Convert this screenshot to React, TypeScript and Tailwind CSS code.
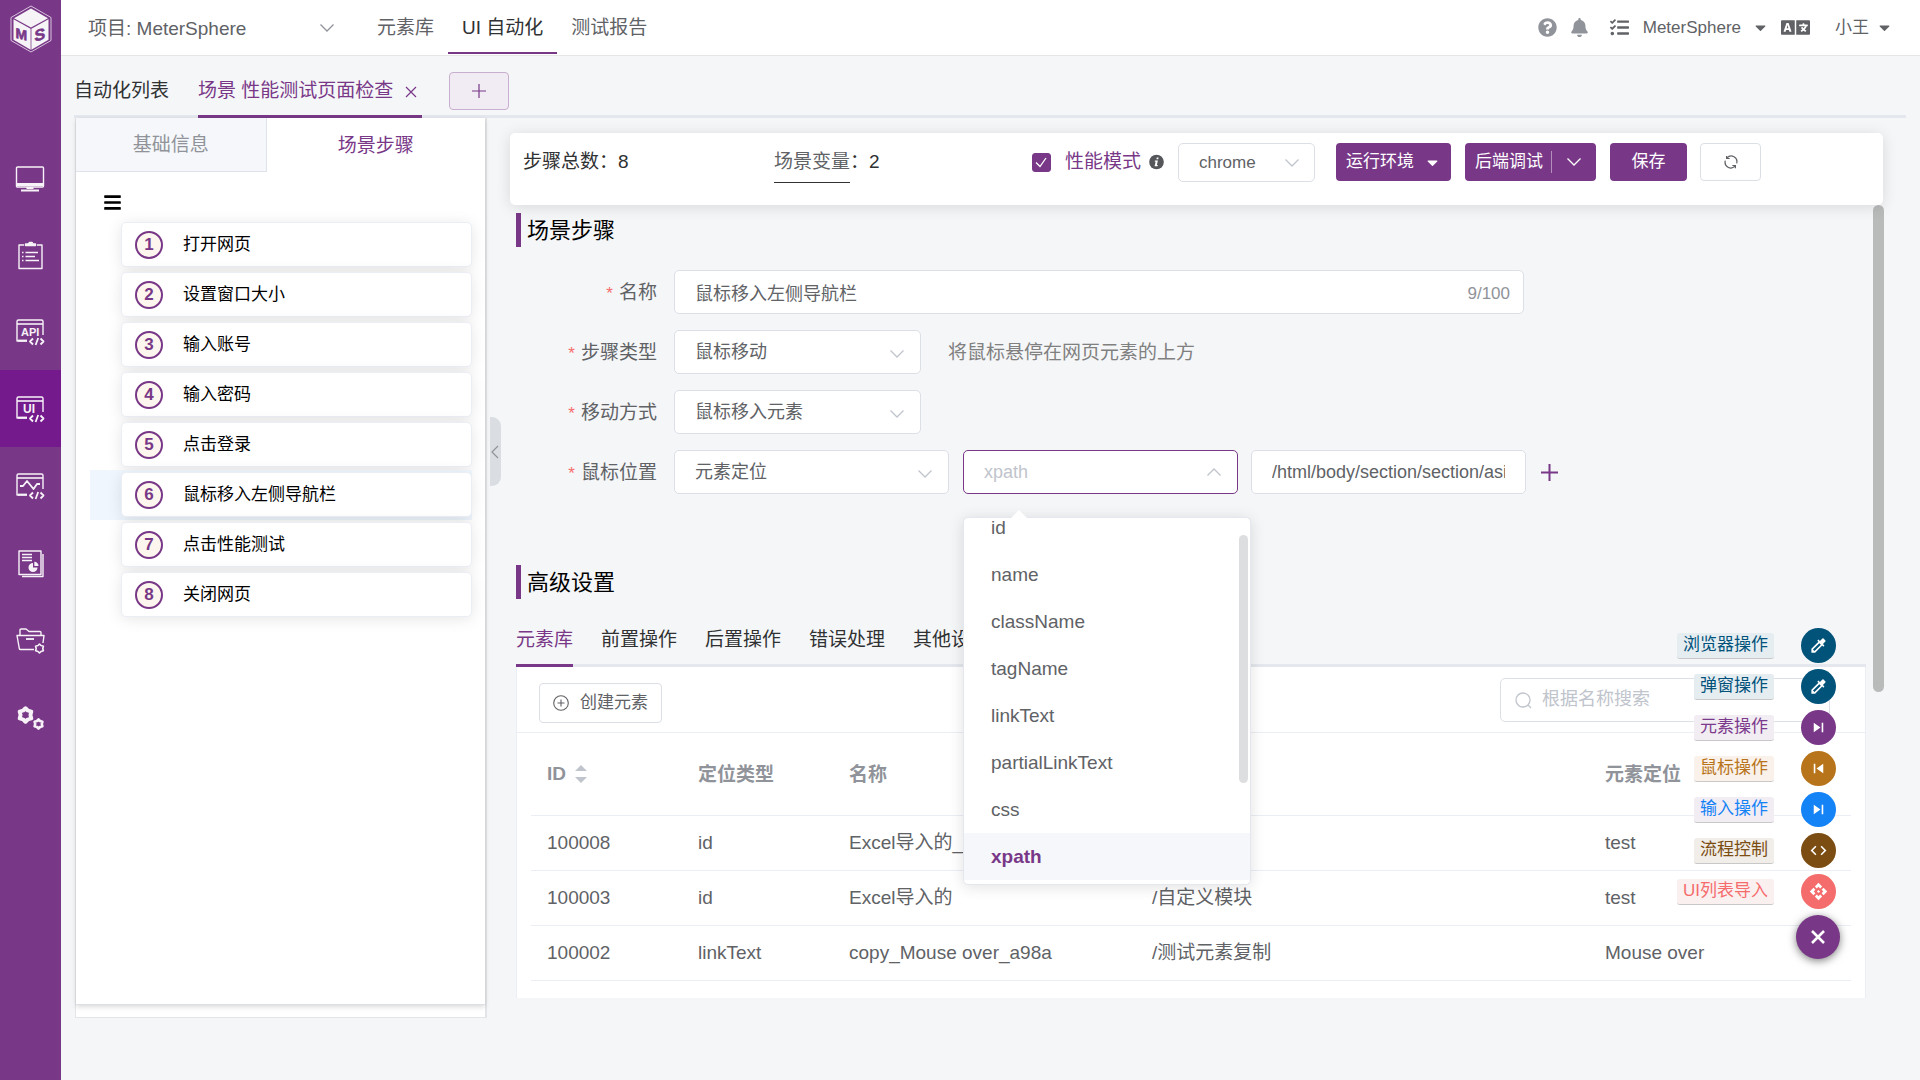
import { ReactNode, useState } from "react";
import { FaBars, FaBell, FaCaretDown, FaLanguage, FaQuestionCircle, FaTasks } from "react-icons/fa";
import { MdApi, MdCode, MdColorize, MdSkipNext, MdSkipPrevious } from "react-icons/md";

const steps = [
  "打开网页",
  "设置窗口大小",
  "输入账号",
  "输入密码",
  "点击登录",
  "鼠标移入左侧导航栏",
  "点击性能测试",
  "关闭网页",
];

const locators = ["id", "name", "className", "tagName", "linkText", "partialLinkText", "css", "xpath"];

const elements = [
  { id: "100008", type: "id", name: "Excel导入的_", module: "", locator: "test" },
  { id: "100003", type: "id", name: "Excel导入的", module: "/自定义模块", locator: "test" },
  { id: "100002", type: "linkText", name: "copy_Mouse over_a98a", module: "/测试元素复制", locator: "Mouse over" },
];

const actions = [
  { label: "浏览器操作", icon: <MdColorize />, text: "text-[#00527a] bg-[#e6edf1]", dot: "bg-[#02537a]" },
  { label: "弹窗操作", icon: <MdColorize />, text: "text-[#00527a] bg-[#e6edf1]", dot: "bg-[#02537a]" },
  { label: "元素操作", icon: <MdSkipNext />, text: "text-[#7b3a8b] bg-[#f2ecf3]", dot: "bg-[#783887]" },
  { label: "鼠标操作", icon: <MdSkipPrevious />, text: "text-[#b8741a] bg-[#f9f1ea]", dot: "bg-[#b8741a]" },
  { label: "输入操作", icon: <MdSkipNext />, text: "text-[#1483f6] bg-[#f2ecf3]", dot: "bg-[#1483f6]" },
  { label: "流程控制", icon: <MdCode />, text: "text-[#7b4d12] bg-[#f1ede8]", dot: "bg-[#7b4d12]" },
  { label: "UI列表导入", icon: <MdApi />, text: "text-[#f56c6c] bg-[#fbf0f0]", dot: "bg-[#f56c6c]" },
];

const Chevron = ({ className = "" }: { className?: string }) => (
  <svg className={`pointer-events-none h-4 w-4 ${className}`} viewBox="0 0 16 16" fill="none" stroke="currentColor" strokeWidth="1.3">
    <path d="M1.5 4.5 8 11 14.5 4.5" />
  </svg>
);

const Logo = () => (
  <svg className="h-12 w-[42px]" viewBox="0 0 42 48">
    <path d="M21 1 41 12.5V35.5L21 47 1 35.5V12.5Z" fill="none" stroke="#d9c4de" strokeWidth="1" />
    <path d="M21 3.5 38 13.2 21 22.6 4 13.2Z" fill="#f7f4f8" />
    <path d="M3.5 14.3 20.6 23.8V44.7L3.5 34.7Z" fill="#f7f4f8" />
    <path d="M38.5 14.3 21.4 23.8V44.7L38.5 34.7Z" fill="#f7f4f8" />
    <g fill="#783887" stroke="#783887" strokeWidth="0.6" fontFamily="Liberation Sans, sans-serif" fontWeight="700">
      <text x="5.5" y="31.5" fontSize="14" transform="skewY(14)">M</text>
      <text x="24.5" y="42.5" fontSize="16" transform="skewY(-14)">S</text>
    </g>
  </svg>
);

const NavSvg = ({ children }: { children: ReactNode }) => (
  <svg className="h-[30px] w-[30px]" viewBox="0 0 30 30" fill="none" stroke="#f7f2f8" strokeWidth="1.4" strokeLinejoin="round">
    {children}
  </svg>
);

// browser frame shared by the api, ui and performance icons
const CodeFrame = ({ children }: { children: ReactNode }) => (
  <NavSvg>
    <path d="M28 17V3.5Q28 2 26.5 2H3.5Q2 2 2 3.5V23H12" />
    <path d="M2 6H28" strokeWidth="1.6" />
    <path d="M3 22.6H12" strokeWidth="2" />
    <path d="M18 20.5 15 23.5 18 26.5M25.5 20.5 28.5 23.5 25.5 26.5M23.2 20 20.6 27" strokeWidth="1.8" />
    {children}
  </NavSvg>
);

const gear = "M0-4.5 1.5-3 3.9-2.3 3.3 0 3.9 2.3 1.5 3 0 4.5-1.5 3-3.9 2.3-3.3 0-3.9-2.3-1.5-3Z";

const navItems = [
  {
    name: "工作台",
    icon: (
      <NavSvg>
        <rect x="1.5" y="3" width="27" height="20" rx="1" />
        <path d="M2 20.5H28" strokeWidth="3" />
        <path d="M11.5 24H18.5M6 26.5H24" strokeWidth="2" />
      </NavSvg>
    ),
  },
  {
    name: "测试跟踪",
    icon: (
      <NavSvg>
        <path d="M9 4H4V27.5H27V4H22" />
        <path d="M10.5 4.5V3H13.5L14.5 1.5H17L18 3H20.5V4.5Z" fill="#f7f2f8" />
        <path d="M7 11.5H8.5M7 15.5H8.5M7 19.5H8.5M10.5 11.5H23M10.5 15.5H20M10.5 19.5H24" />
      </NavSvg>
    ),
  },
  {
    name: "接口测试",
    icon: (
      <CodeFrame>
        <text x="6" y="17.5" fontSize="11" fontWeight="700" fill="#f7f2f8" stroke="none" fontFamily="Liberation Sans, sans-serif">API</text>
      </CodeFrame>
    ),
  },
  {
    name: "UI测试",
    icon: (
      <CodeFrame>
        <text x="8" y="18" fontSize="12" fontWeight="700" fill="#f7f2f8" stroke="none" fontFamily="Liberation Sans, sans-serif">UI</text>
      </CodeFrame>
    ),
  },
  {
    name: "性能测试",
    icon: (
      <CodeFrame>
        <path d="M5 14H8L12 9 18.5 17 22 12H25" strokeWidth="1.8" />
      </CodeFrame>
    ),
  },
  {
    name: "报表统计",
    icon: (
      <NavSvg>
        <rect x="4" y="2" width="22" height="23.5" />
        <path d="M28 5V27.5H7" />
        <path d="M7 5.5H17M7 8.5H17M7 11.5H17" />
        <path d="M18 14A4.5 4.5 0 1 0 22.5 18.5H18Z" fill="#f7f2f8" stroke="none" />
        <path d="M19.3 12.8A4.2 4.2 0 0 1 23.5 17H19.3Z" fill="#f7f2f8" stroke="none" />
      </NavSvg>
    ),
  },
  {
    name: "项目设置",
    icon: (
      <NavSvg>
        <path d="M5 9V4Q5 3 6 3H11L14 5.5H25Q26 5.5 26 6.5V9" />
        <path d="M19 23.5H5.5Q4.5 23.5 4.3 22.5L2 9.5H29L28 17" />
        <path d="M11 13H19" strokeWidth="1.8" />
        <g transform="translate(24.5 22.5)"><path d={gear} strokeWidth="1.6" /></g>
      </NavSvg>
    ),
  },
  {
    name: "系统设置",
    icon: (
      <NavSvg>
        <g transform="translate(10.5 12) scale(1.5)"><path d={gear} strokeWidth="2.6" /></g>
        <g transform="translate(23.5 21)"><path d={gear} strokeWidth="2.6" /></g>
      </NavSvg>
    ),
  },
];

const Sidebar = () => (
  <aside className="flex w-[61px] shrink-0 flex-col bg-[#783887]">
    <div className="flex h-[139px] justify-center pt-[5px]">
      <Logo />
    </div>
    <nav>
      {navItems.map((item) => (
        <a
          key={item.name}
          href="#"
          aria-label={item.name}
          className={`flex h-[77px] items-center justify-center pt-[2px] pr-[2px] ${item.name === "UI测试" ? "bg-[#751a8c]" : ""}`}
        >
          {item.icon}
        </a>
      ))}
    </nav>
  </aside>
);

const Header = () => (
  <header className="flex h-14 shrink-0 items-stretch border-b border-[#e6e6e6] bg-white px-[27px] text-[#606266]">
    <button className="flex w-[247px] items-center justify-between pt-1 text-[19px]">
      <span>项目: MeterSphere</span>
      <Chevron className="mb-1 text-[#909399]" />
    </button>
    <nav className="ml-[28px] flex text-[19px]">
      <a href="#" className="flex h-[54px] items-center px-[14px] pt-[2px]">元素库</a>
      <a href="#" className="flex h-[54px] items-center border-b-2 border-[#783887] px-[14px] pt-1 text-[#303133]">UI 自动化</a>
      <a href="#" className="flex h-[54px] items-center px-[14px] pt-[2px]">测试报告</a>
    </nav>
    <div className="ml-auto flex h-[54px] items-center pt-px text-[17px]">
      <button aria-label="帮助"><FaQuestionCircle className="text-[19px] text-[#909399]" /></button>
      <button aria-label="通知" className="ml-[13px]"><FaBell className="text-[19px] text-[#909399]" /></button>
      <button aria-label="任务" className="ml-[21px]"><FaTasks className="text-[19px]" /></button>
      <button className="ml-[14px] flex items-center gap-[11px]">
        MeterSphere
        <FaCaretDown />
      </button>
      <button aria-label="语言" className="ml-[12px]"><FaLanguage className="text-[29px]" /></button>
      <button className="ml-[25px] flex items-center gap-[7px]">
        小王
        <FaCaretDown />
      </button>
    </div>
  </header>
);

const StepPanel = () => {
  const [current, setCurrent] = useState(5);
  return (
    <section className="mb-[62px] flex w-[412px] shrink-0 flex-col border border-t-0 border-r-2 border-[#e4e5e8] bg-white pb-3">
      <div className="flex-1 border-b border-[#dcdfe6] shadow-[0_2px_5px_rgba(0,0,0,0.15)]">
        <div className="flex h-[54px] text-[19px]">
          <button className="flex-[190] border-r border-b border-[#dfe3ec] bg-[#f5f7fa] pt-[2px] text-[#909399]">基础信息</button>
          <button className="flex-[219] pt-[2px] text-[#783887]">场景步骤</button>
        </div>
        <button aria-label="菜单" className="mt-[21px] ml-[27px] block text-[19px] text-black"><FaBars /></button>
        <ul className="mt-2 mr-[13px] ml-[14px]">
          {steps.map((step, i) => (
            <li key={step} className={`pt-[2px] pb-[3px] pl-[31px] ${i === current ? "bg-[#eff6fe]" : ""}`}>
              <button
                onClick={() => setCurrent(i)}
                className="flex h-[45px] w-full items-center rounded-[5px] border border-[#ebeef5] bg-white pl-[13px] text-left text-[17px] text-black shadow-[0_2px_15px_rgba(0,0,0,0.1)]"
              >
                <span className="flex h-7 w-7 items-center justify-center rounded-full border-2 border-[#783887] bg-[#fcf6ee] font-bold text-[#783887]">
                  {i + 1}
                </span>
                <span className="ml-5">{step}</span>
              </button>
            </li>
          ))}
        </ul>
      </div>
    </section>
  );
};

const Toolbar = () => (
  <div className="relative z-10 mr-[37px] ml-[9px] flex h-[72px] items-start rounded-[5px] bg-white pt-[10px] pr-[122px] pl-[13px] text-[17px] shadow-[0_2px_15px_rgba(0,0,0,0.12)]">
    <p className="flex h-[38px] w-[251px] items-center text-[19px] text-[#303133]">步骤总数：8</p>
    <p className="flex h-[38px] items-center text-[19px] text-[#303133]">
      <a href="#" className="border-b border-[#303133] pt-[7px] pb-[6px] text-[#606266]">场景变量</a>：2
    </p>
    <label className="ml-auto flex h-[38px] items-center gap-[14px] text-[19px] text-[#783887]">
      <span className="relative h-[19px] w-[19px]">
        <input type="checkbox" defaultChecked className="block h-[19px] w-[19px] appearance-none rounded-[3px] border border-[#783887] checked:bg-[#783887]" />
        <svg className="pointer-events-none absolute inset-0" viewBox="0 0 19 19" fill="none" stroke="#fff" strokeWidth="1.3">
          <path d="M4 9.5 8 13.5 14 5" />
        </svg>
      </span>
      性能模式
    </label>
    <svg className="ml-2 h-[38px] w-[15px]" viewBox="0 0 16 16">
      <circle cx="8" cy="8" r="7.8" fill="#54565a" />
      <path d="M8.3 3.2h1.9l-.4 1.8H7.9ZM6.3 6.4h3.2l-1.1 4.7h1l-.3 1.3H5.9l1.2-4.7h-1Z" fill="#fff" />
    </svg>
    <div className="relative ml-[14px]">
      <select aria-label="浏览器" className="h-[39px] w-[137px] appearance-none rounded-[5px] border border-[#dcdfe6] bg-white pl-5 text-[#606266]">
        <option>chrome</option>
      </select>
      <Chevron className="absolute top-3 right-[15px] text-[#c0c4cc]" />
    </div>
    <button className="ml-[21px] flex h-[38px] items-center gap-[10px] rounded-[4px] bg-[#783887] px-[10px] text-white">
      运行环境
      <FaCaretDown />
    </button>
    <div className="ml-[14px] flex h-[38px] items-center rounded-[4px] bg-[#783887] text-white">
      <button className="py-1 pr-2 pl-[10px]">后端调试</button>
      <button aria-label="更多调试" className="border-l border-[#b48fbe] px-[14px] py-[3px]"><Chevron /></button>
    </div>
    <button className="ml-[14px] h-[38px] w-[77px] rounded-[4px] bg-[#783887] text-white">保存</button>
    <button aria-label="刷新" className="ml-[13px] flex h-[38px] w-[61px] items-center justify-center rounded-[4px] border border-[#dcdfe6] text-[#606266]">
      <svg className="h-[14px] w-[14px]" viewBox="0 0 16 16" fill="none" stroke="currentColor" strokeWidth="1.4">
        <path d="M14.5 9.5A6.5 6.5 0 0 0 3.5 3.3M1.5 6.5A6.5 6.5 0 0 0 12.5 12.7M3 1V4H6.5M13 15V12H9.5" />
      </svg>
    </button>
  </div>
);

const FormRow = ({ id, label, children }: { id: string; label: string; children: ReactNode }) => (
  <div className="flex h-11 items-center">
    <label htmlFor={id} className="mr-[17px] w-[141px] pt-[2px] text-right text-[19px] text-[#606266]">
      <span className="mr-[6px] text-[17px] text-[#f56c6c]">*</span>
      {label}
    </label>
    {children}
  </div>
);

const Select = ({ id, value, wide }: { id: string; value: string; wide?: boolean }) => (
  <div className="relative">
    <select
      id={id}
      className={`h-11 appearance-none rounded-[5px] border border-[#dcdfe6] bg-white pl-5 text-[18px] text-[#606266] ${wide ? "w-[275px]" : "w-[247px]"}`}
    >
      <option>{value}</option>
    </select>
    <Chevron className="absolute top-4 right-4 text-[#c0c4cc]" />
  </div>
);

const LocatorSelect = () => {
  const [locator, setLocator] = useState("xpath");
  return (
    <div className="relative ml-[14px]">
      <input
        aria-label="定位方式"
        role="combobox"
        aria-expanded="true"
        readOnly
        placeholder={locator}
        className="h-11 w-[275px] rounded-[5px] border border-[#783887] bg-white pl-5 text-[18px] placeholder:text-[#c0c4cc]"
      />
      <Chevron className="absolute top-[14px] right-4 rotate-180 text-[#c0c4cc]" />
      <div className="absolute top-[67px] left-0 z-20 h-[368px] w-[288px] rounded-[5px] border border-[#e4e7ed] bg-white shadow-[0_2px_15px_rgba(0,0,0,0.12)]">
        <svg className="absolute -top-2 left-[47px] h-2 w-4" viewBox="0 0 16 8">
          <path d="M0 8 8 0 16 8Z" fill="#fff" />
        </svg>
        <div className="h-full overflow-hidden">
          <ul role="listbox" className="-mt-[14px] text-[19px] leading-5 text-[#606266]">
            {locators.map((name) => (
              <li
                key={name}
                role="option"
                aria-selected={name === locator}
                onClick={() => setLocator(name)}
                className={`flex h-[47px] items-center px-[27px] ${name === locator ? "bg-[#f5f7fa] font-bold text-[#783887]" : ""}`}
              >
                {name}
              </li>
            ))}
          </ul>
        </div>
        <div className="absolute top-[17px] right-[2px] h-[248px] w-[9px] rounded-full bg-[#dddee0]" />
      </div>
    </div>
  );
};

const SectionTitle = ({ children }: { children: ReactNode }) => (
  <h2 className="flex h-[34px] items-center border-l-[5px] border-[#783887] pl-[6px] text-[22px] text-black">{children}</h2>
);

const StepForm = () => (
  <form className="mt-[23px] flex flex-col gap-4">
    <FormRow id="name" label="名称">
      <div className="relative">
        <input
          id="name"
          defaultValue="鼠标移入左侧导航栏"
          className="h-11 w-[850px] rounded-[5px] border border-[#dcdfe6] bg-white pr-16 pl-5 text-[18px] text-[#606266]"
        />
        <span className="absolute top-[11px] right-[14px] text-[17px] text-[#909399]">9/100</span>
      </div>
    </FormRow>
    <FormRow id="type" label="步骤类型">
      <Select id="type" value="鼠标移动" />
      <span className="ml-[27px] pt-[2px] text-[19px] text-[#808080]">将鼠标悬停在网页元素的上方</span>
    </FormRow>
    <FormRow id="mode" label="移动方式">
      <Select id="mode" value="鼠标移入元素" />
    </FormRow>
    <FormRow id="position" label="鼠标位置">
      <Select id="position" value="元素定位" wide />
      <LocatorSelect />
      <input
        aria-label="定位表达式"
        defaultValue="/html/body/section/section/asi"
        className="ml-[13px] h-11 w-[275px] rounded-[5px] border border-[#dcdfe6] bg-white px-5 text-[18px] text-[#606266]"
      />
      <button type="button" aria-label="添加" className="ml-[15px] text-[#783887]">
        <svg className="h-[17px] w-[17px]" viewBox="0 0 17 17" stroke="currentColor" strokeWidth="2">
          <path d="M8.5 0V17M0 8.5H17" />
        </svg>
      </button>
    </FormRow>
  </form>
);

const ElementTable = () => (
  <div className="border-x border-[#ebeef5] bg-white">
    <div className="flex h-[66px] items-center justify-between border-b border-[#ebeef5] pr-[35px] pl-[22px]">
      <button className="mt-[6px] flex h-10 items-center gap-[11px] rounded-[4px] border border-[#dcdfe6] px-[13px] text-[17px] text-[#606266]">
        <svg className="h-4 w-4" viewBox="0 0 16 16" fill="none" stroke="currentColor" strokeWidth="1.1">
          <circle cx="8" cy="8" r="7.3" />
          <path d="M8 4.5V11.5M4.5 8H11.5" />
        </svg>
        创建元素
      </button>
      <div className="relative">
        <svg className="absolute top-[14px] left-[15px] h-[17px] w-[17px] text-[#c0c4cc]" viewBox="0 0 17 17" fill="none" stroke="currentColor" strokeWidth="1.3">
          <circle cx="8" cy="8" r="7" />
          <path d="M13 13 16 16" />
        </svg>
        <input
          aria-label="搜索"
          placeholder="根据名称搜索"
          className="h-11 w-[330px] rounded-[5px] border border-[#dcdfe6] pl-[41px] text-[18px] placeholder:text-[#c0c4cc]"
        />
      </div>
    </div>
    <div className="px-[14px]">
      <table className="w-full table-fixed text-left text-[19px] text-[#606266]">
        <colgroup>
          <col className="w-[151px]" />
          <col className="w-[151px]" />
          <col className="w-[303px]" />
          <col />
          <col className="w-[262px]" />
        </colgroup>
        <thead>
          <tr className="h-[82px] border-b border-[#ebeef5] text-[#909399]">
            <th className="pl-4">
              <span className="flex items-center gap-[9px]">
                ID
                <svg className="h-[18px] w-3" viewBox="0 0 12 18" fill="#c0c4cc">
                  <path d="M6 0 12 6H0ZM6 18 12 12H0Z" />
                </svg>
              </span>
            </th>
            <th className="pt-[2px] pl-4">定位类型</th>
            <th className="pt-[2px] pl-4">名称</th>
            <th className="pl-4"></th>
            <th className="pt-[2px] pl-4">元素定位</th>
          </tr>
        </thead>
        <tbody>
          {elements.map((row) => (
            <tr key={row.id} className="h-[55px] border-b border-[#ebeef5]">
              <td className="pt-px pl-4">{row.id}</td>
              <td className="pt-px pl-4">{row.type}</td>
              <td className="pt-px pl-4">{row.name}</td>
              <td className="pt-px pl-4">{row.module}</td>
              <td className="pt-px pl-4">{row.locator}</td>
            </tr>
          ))}
        </tbody>
      </table>
      <div className="h-20" />
    </div>
  </div>
);

const ActionMenu = () => (
  <div className="absolute right-[80px] bottom-[121px] z-30 flex flex-col items-end gap-[6px]">
    {actions.map((action) => (
      <button key={action.label} className="mr-1 flex items-center gap-[27px]">
        <span className={`flex h-[26px] items-center rounded-[3px] border-b border-[#c8c8c8] px-[6px] text-[17px] ${action.text}`}>
          {action.label}
        </span>
        <span className={`flex h-[35px] w-[35px] items-center justify-center rounded-full text-[19px] text-white ${action.dot}`}>
          {action.icon}
        </span>
      </button>
    ))}
    <button aria-label="关闭" className="flex h-11 w-11 items-center justify-center rounded-full bg-[#783887] text-white shadow-[0_2px_8px_rgba(0,0,0,0.5)]">
      <svg className="h-[14px] w-[14px]" viewBox="0 0 14 14" stroke="currentColor" strokeWidth="2.6">
        <path d="M1 1 13 13M13 1 1 13" />
      </svg>
    </button>
  </div>
);

const App = () => (
  <div className="relative flex h-screen overflow-hidden bg-[#f5f6f8] font-['Liberation_Sans','Noto_Sans_CJK_SC',sans-serif]">
    <Sidebar />
    <div className="flex min-w-0 flex-1 flex-col">
      <Header />
      <div className="mr-[14px] ml-[13px] flex h-[62px] shrink-0 border-b-3 border-[#e4e7ed] text-[19px]">
        <a href="#" className="flex h-[62px] items-center pt-[9px] text-[#303133]">自动化列表</a>
        <a href="#" className="ml-[29px] flex h-[62px] items-center gap-[12px] border-b-3 border-[#783887] pt-3 pr-[5px] text-[#783887]">
          场景 性能测试页面检查
          <svg className="h-3 w-3" viewBox="0 0 12 12" stroke="currentColor" strokeWidth="1.2">
            <path d="M1 1 11 11M11 1 1 11" />
          </svg>
        </a>
        <button aria-label="新建" className="mt-4 ml-[27px] flex h-[38px] w-[60px] items-center justify-center rounded-[4px] border border-[#c9afcf] bg-[#f1ebf3] text-[#783887]">
          <svg className="h-[14px] w-[14px]" viewBox="0 0 14 14" stroke="currentColor" strokeWidth="1.2">
            <path d="M7 0V14M0 7H14" />
          </svg>
        </button>
      </div>
      <div className="flex min-h-0 flex-1 pl-[14px]">
        <StepPanel />
        <button aria-label="收起" className="mt-[299px] ml-[3px] flex h-[69px] w-[11px] shrink-0 items-center rounded-r-[9px] bg-[#dadee2] text-[#909399]">
          <svg className="h-[14px] w-[9px]" viewBox="0 0 9 14" fill="none" stroke="currentColor" strokeWidth="1.2">
            <path d="M8 1 2 7 8 13" />
          </svg>
        </button>
        <main className="flex min-w-0 flex-1 flex-col pt-[15px]">
          <Toolbar />
          <div className="mr-[36px] mb-[82px] ml-[15px] flex min-h-0 flex-1">
            <div className="min-w-0 flex-1 overflow-hidden pt-2">
              <SectionTitle>场景步骤</SectionTitle>
              <StepForm />
              <div className="mt-[71px]">
                <SectionTitle>高级设置</SectionTitle>
              </div>
              <nav className="mt-2 flex h-[60px] gap-[28px] border-b-3 border-[#e4e7ed] text-[19px] text-[#303133]">
                <a href="#" className="flex h-[60px] items-center border-b-3 border-[#783887] pt-[9px] text-[#783887]">元素库</a>
                <a href="#" className="flex h-[60px] items-center pt-[6px]">前置操作</a>
                <a href="#" className="flex h-[60px] items-center pt-[6px]">后置操作</a>
                <a href="#" className="flex h-[60px] items-center pt-[6px]">错误处理</a>
                <a href="#" className="flex h-[60px] items-center pt-[6px]">其他设置</a>
              </nav>
              <ElementTable />
            </div>
            <div className="ml-[7px] h-[487px] w-[11px] shrink-0 rounded-full bg-[#b9bbbb]" />
          </div>
        </main>
      </div>
    </div>
    <ActionMenu />
  </div>
);

export default App;
